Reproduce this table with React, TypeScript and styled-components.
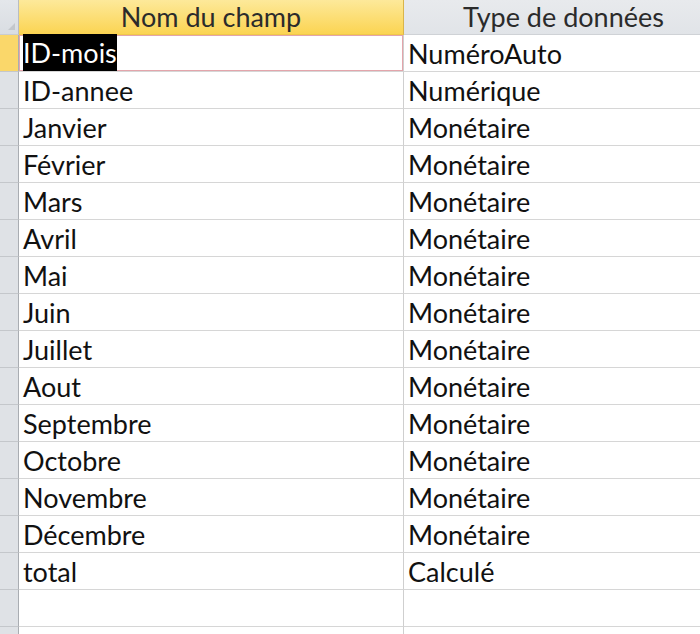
import React from "react";
import styled, { createGlobalStyle } from "styled-components";

const Global = createGlobalStyle`
  html, body { margin: 0; padding: 0; background: #fff; }
  body { font-family: Lato, "Open Sans", sans-serif; overflow: hidden; }
`;

const Viewport = styled.div`
  width: 700px;
  height: 634px;
  overflow: hidden;
`;

const Grid = styled.div`
  display: grid;
  grid-template-columns: 19px 385px 320px;
  width: 724px;
  grid-auto-rows: 37px;
  grid-template-rows: 35px;
  background: #fff;
`;

const Corner = styled.div`
  position: relative;
  background: linear-gradient(#e4e7eb, #d9dde2);
  border-right: 1px solid #b9bdc2;
  border-bottom: 1px solid #c9ccd0;
  box-sizing: border-box;
  &::after {
    content: "";
    position: absolute;
    right: 3px;
    bottom: 4px;
    width: 0;
    height: 0;
    border-left: 7px solid transparent;
    border-bottom: 7px solid #c3c7cc;
  }
`;

const HeaderCell = styled.div<{ $active?: boolean }>`
  box-sizing: border-box;
  display: flex;
  align-items: center;
  justify-content: center;
  font-size: 27px;
  color: #2b2b2b;
  padding-bottom: 2px;
  background: ${(p) =>
    p.$active ? "linear-gradient(#fde99a, #fbd452)" : "linear-gradient(#e8eaed, #e1e4e8)"};
  border-right: 1px solid ${(p) => (p.$active ? "#d9b54a" : "#d0d3d7")};
  border-bottom: 1px solid ${(p) => (p.$active ? "#f0c84a" : "#cfd2d6")};
`;

const Selector = styled.div<{ $active?: boolean }>`
  box-sizing: border-box;
  background: ${(p) => (p.$active ? "#fad76a" : "#dfe2e6")};
  border-right: 1px solid #a9adb2;
  border-bottom: 1px solid #c4c7cb;
`;

const Cell = styled.div<{ $focused?: boolean; $last?: boolean }>`
  box-sizing: border-box;
  display: flex;
  align-items: center;
  padding-left: 4px;
  font-size: 27px;
  color: #111;
  border-bottom: 1px solid #d6d6d6;
  border-right: ${(p) => (p.$last ? "none" : "1px solid #cfcfcf")};
  ${(p) => (p.$focused ? "box-shadow: inset 0 0 0 1px #e3a5ab;" : "")}
`;

const Selected = styled.span`
  background: #000;
  color: #fff;
  align-self: stretch;
  display: flex;
  align-items: center;
  margin-top: -1px;
`;

const rows: [string, string][] = [
  ["ID-mois", "NuméroAuto"],
  ["ID-annee", "Numérique"],
  ["Janvier", "Monétaire"],
  ["Février", "Monétaire"],
  ["Mars", "Monétaire"],
  ["Avril", "Monétaire"],
  ["Mai", "Monétaire"],
  ["Juin", "Monétaire"],
  ["Juillet", "Monétaire"],
  ["Aout", "Monétaire"],
  ["Septembre", "Monétaire"],
  ["Octobre", "Monétaire"],
  ["Novembre", "Monétaire"],
  ["Décembre", "Monétaire"],
  ["total", "Calculé"],
  ["", ""],
  ["", ""],
];

export default function App() {
  return (
    <>
      <Global />
      <Viewport>
        <Grid>
          <Corner />
          <HeaderCell $active>Nom du champ</HeaderCell>
          <HeaderCell>Type de données</HeaderCell>
          {rows.map(([name, type], i) => (
            <React.Fragment key={i}>
              <Selector $active={i === 0} />
              <Cell $focused={i === 0}>
                {i === 0 ? <Selected>{name}</Selected> : name}
              </Cell>
              <Cell $last>{type}</Cell>
            </React.Fragment>
          ))}
        </Grid>
      </Viewport>
    </>
  );
}
